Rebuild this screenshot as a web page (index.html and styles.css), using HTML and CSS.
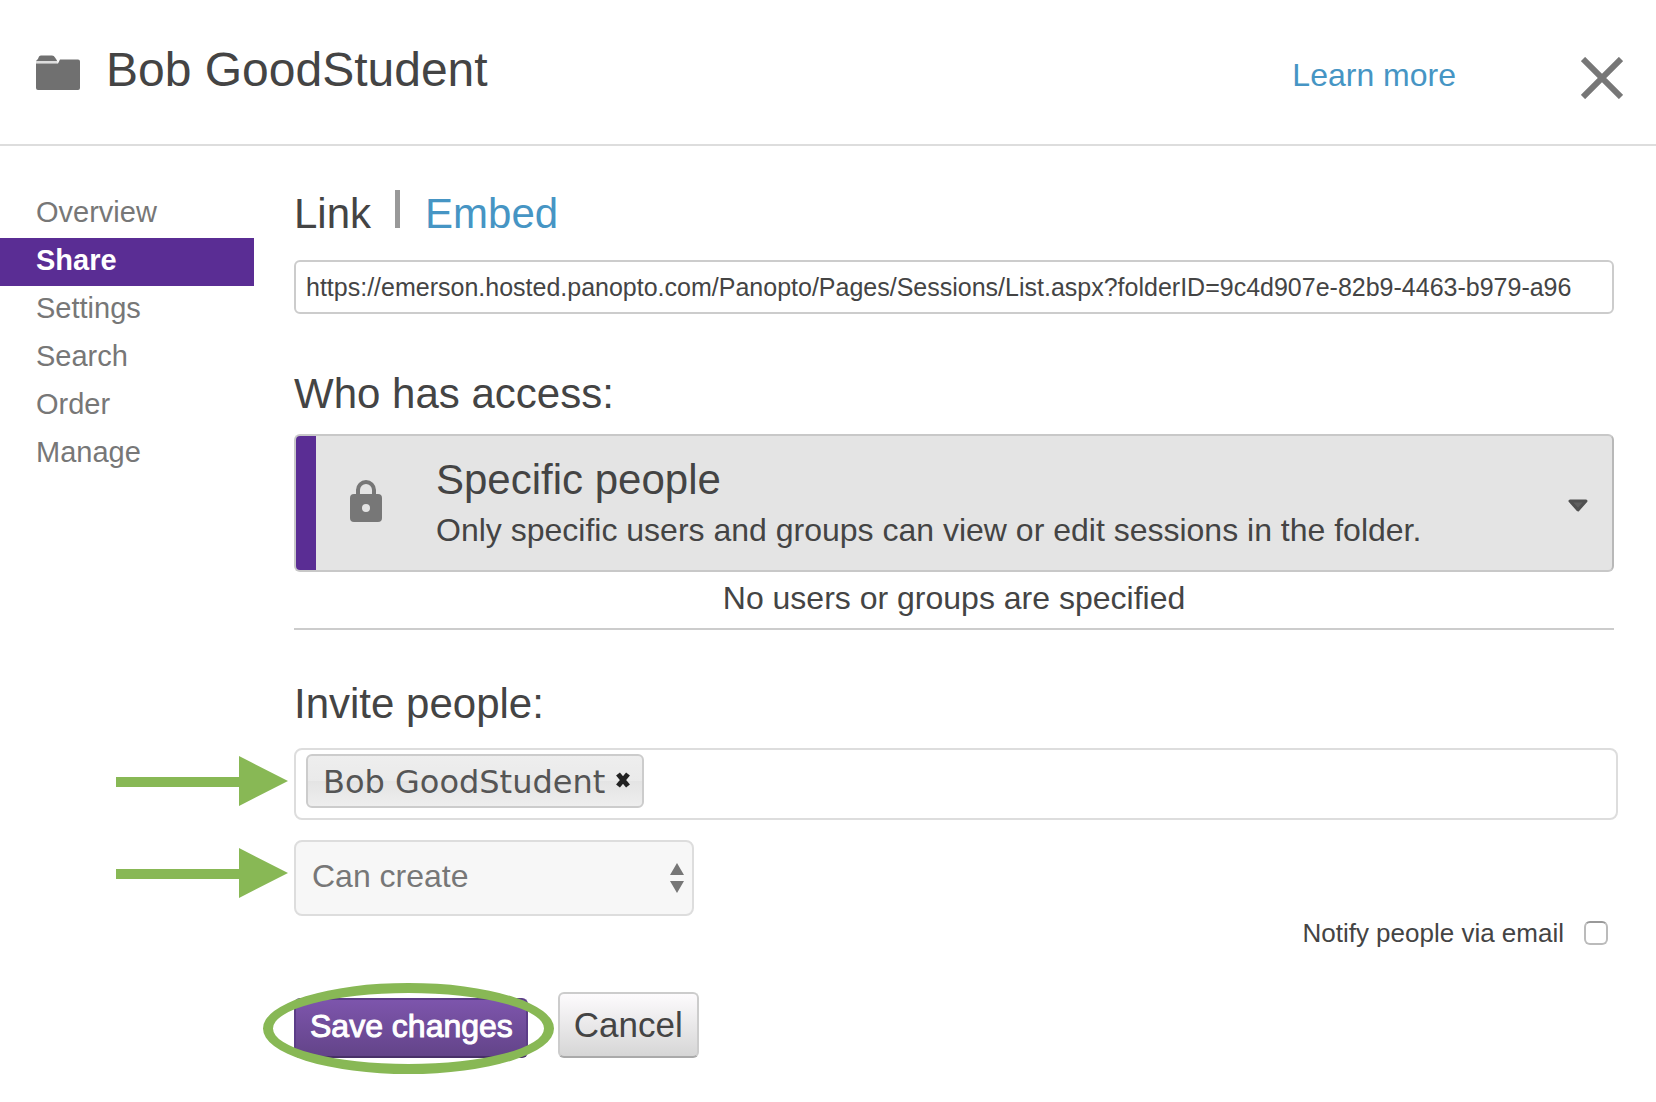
FILE: index.html
```html
<!DOCTYPE html>
<html lang="en">
<head>
    <meta charset="UTF-8">
    <meta name="viewport" content="width=device-width, initial-scale=1.0">
    <title>Bob GoodStudent</title>
    <link rel="stylesheet" href="styles.css">
</head>
<body>
    <header class="header">
        <svg class="folder-icon" width="44" height="36" viewBox="0 0 44 36">
            <path d="M0 6 Q2 5 3 1.5 Q4 0.5 5 0.5 H16 Q18 0.5 19 2.5 L21 5.5 L20.5 6.5 H0z" fill="#707070"/>
            <path d="M0 6 H21.5 V8.5 H0z" fill="#ddd"/>
            <path d="M0 8.5 H22 L24 4.5 H42 Q44 4.5 44 6.5 V33 Q44 35 42 35 H2 Q0 35 0 33z" fill="#707070"/>
        </svg>
        <h1>Bob GoodStudent</h1>
        <a class="learn-more" href="#">Learn more</a>
        <button class="close-button" type="button" aria-label="Close">
            <svg width="42" height="42" viewBox="0 0 42 42">
                <path d="M2 2 L40 40 M40 2 L2 40" stroke="#777" stroke-width="6"/>
            </svg>
        </button>
    </header>

    <div class="content">
        <nav class="sidebar">
            <a href="#">Overview</a>
            <a href="#" class="active">Share</a>
            <a href="#">Settings</a>
            <a href="#">Search</a>
            <a href="#">Order</a>
            <a href="#">Manage</a>
        </nav>

        <main class="main">
            <div class="tabs">
                <h2>Link</h2>
                <span class="separator"></span>
                <a href="#">Embed</a>
            </div>
            <input class="url-input" type="text" aria-label="Link" readonly value="https://emerson.hosted.panopto.com/Panopto/Pages/Sessions/List.aspx?folderID=9c4d907e-82b9-4463-b979-a96">

            <h2 class="access-title">Who has access:</h2>
            <button class="access-select" type="button">
                <span class="access-bar"></span>
                <svg class="lock-icon" width="32" height="42" viewBox="0 0 32 42">
                    <path d="M8 16 V10 a8 8 0 0 1 16 0 V16" fill="none" stroke="#777" stroke-width="4"/>
                    <path fill-rule="evenodd" d="M4 14 H28 a4 4 0 0 1 4 4 V38 a4 4 0 0 1 -4 4 H4 a4 4 0 0 1 -4 -4 V18 a4 4 0 0 1 4 -4z M16 24 a4 4 0 1 0 0 8 a4 4 0 1 0 0 -8z" fill="#777"/>
                </svg>
                <span class="access-text">
                    <span class="access-name">Specific people</span>
                    <span class="access-info">Only specific users and groups can view or edit sessions in the folder.</span>
                </span>
                <svg class="caret-icon" width="22" height="14" viewBox="0 0 22 14">
                    <path d="M3 2 H19 L11 11z" fill="#606060" stroke="#505050" stroke-width="3" stroke-linejoin="round"/>
                </svg>
            </button>
            <p class="no-users">No users or groups are specified</p>

            <h2 class="invite-title"><label for="invite">Invite people:</label></h2>
            <div class="field">
                <svg class="arrow" width="172" height="50" viewBox="0 0 172 50">
                    <path d="M0 21 H123 V0 L172 25 L123 50 V31 H0z" fill="#88b855"/>
                </svg>
                <div class="invite-box">
                    <span class="chip">
                        Bob GoodStudent
                        <button type="button" aria-label="Remove Bob GoodStudent">
                            <svg width="16" height="16" viewBox="0 0 16 16">
                                <path d="M3 2 L13 14 M13 2 L3 14" stroke="#222" stroke-width="5"/>
                            </svg>
                        </button>
                    </span>
                    <input type="text" id="invite">
                </div>
            </div>
            <div class="field role-field">
                <svg class="arrow" width="172" height="50" viewBox="0 0 172 50">
                    <path d="M0 21 H123 V0 L172 25 L123 50 V31 H0z" fill="#88b855"/>
                </svg>
                <div class="role-box">
                    <select class="role-select" aria-label="Role">
                        <option>Can create</option>
                    </select>
                    <svg class="updown-icon" width="14" height="30" viewBox="0 0 14 30">
                        <path d="M0 12 L7 0 L14 12z M0 18 H14 L7 30z" fill="#777"/>
                    </svg>
                </div>
            </div>

            <div class="notify">
                <label for="notify">Notify people via email</label>
                <input type="checkbox" id="notify">
            </div>

            <div class="buttons">
                <div class="save-wrap">
                    <button class="save-button" type="button">Save changes</button>
                    <span class="ring"></span>
                </div>
                <button class="cancel-button" type="button">Cancel</button>
            </div>
        </main>
    </div>
</body>
</html>
```

FILE: styles.css
```css
* {
    box-sizing: border-box;
}

body {
    margin: 0;
    background-color: #fff;
    color: #444;
    font-family: "Liberation Sans", Arial, sans-serif;
    font-size: 32px;
    line-height: 40px;
}

svg {
    display: block;
    flex-shrink: 0;
}

a {
    color: #4695c4;
    text-decoration: none;
}

button,
input,
select {
    margin: 0;
    color: inherit;
    font-family: inherit;
}

button {
    cursor: pointer;
}

h1,
h2,
p {
    margin: 0;
    font-weight: normal;
}

h1 {
    padding-bottom: 4px;
    font-size: 48px;
    line-height: 56px;
}

h2,
.tabs a {
    font-size: 42px;
    line-height: 48px;
}

.header {
    display: flex;
    align-items: center;
    height: 146px;
    padding: 0 33px 0 36px;
    border-bottom: 2px solid #ddd;
}

.folder-icon {
    margin: 2px 26px 0 0;
}

.learn-more {
    margin-left: auto;
    padding-top: 6px;
}

.close-button {
    margin-left: 125px;
    padding: 12px 0 0;
    border: none;
    background: none;
}

.content {
    display: flex;
    padding-top: 44px;
}

.sidebar {
    flex: 0 0 254px;
}

.sidebar a {
    display: block;
    padding: 0 0 4px 36px;
    color: #777;
    font-size: 29px;
    line-height: 44px;
}

.sidebar a.active {
    background-color: #5a2d94;
    color: #fff;
    font-weight: bold;
}

.main {
    flex: 1;
    min-width: 0;
    padding: 0 42px 40px 40px;
}

.tabs {
    display: flex;
    margin-bottom: 22px;
}

.separator {
    width: 5px;
    height: 38px;
    margin: 0 25px 0 24px;
    background-color: #999;
}

.url-input {
    display: block;
    width: 100%;
    height: 54px;
    padding: 0 10px;
    border: 2px solid #ccc;
    border-radius: 6px;
    font-size: 25px;
}

.access-title {
    margin: 56px 0 16px;
}

.access-select {
    display: flex;
    align-items: center;
    width: 100%;
    padding: 0 23px 0 0;
    overflow: hidden;
    border: 2px solid #c8c8c8;
    border-right-color: #b8b8b8;
    border-radius: 6px;
    background-color: #e4e4e4;
    text-align: left;
}

.access-bar {
    align-self: stretch;
    width: 20px;
    background-color: #5a2d94;
}

.lock-icon {
    margin: 0 54px 4px 34px;
}

.access-text {
    flex: 1;
    padding: 20px 0;
}

.access-name,
.access-info {
    display: block;
}

.access-name {
    font-size: 42px;
    line-height: 48px;
}

.access-info {
    margin-top: 6px;
    font-size: 32px;
    line-height: 40px;
}

.caret-icon {
    margin-top: 6px;
}

.no-users {
    padding: 6px 0 10px;
    border-bottom: 2px solid #ccc;
    text-align: center;
}

.invite-title {
    margin: 50px 0 20px;
}

.field {
    position: relative;
}

/* green arrows point at the fields from the left */
.arrow {
    position: absolute;
    top: 8px;
    right: 100%;
    margin-right: 6px;
}

.invite-box {
    display: flex;
    height: 72px;
    margin-right: -4px;
    padding: 4px 10px;
    border: 2px solid #ddd;
    border-radius: 8px;
}

.chip {
    display: flex;
    align-items: center;
    height: 54px;
    padding: 2px 11px 0 15px;
    border: 2px solid #ccc;
    border-radius: 6px;
    background: linear-gradient(#eee, #eaeaea 50%, #e4e4e4 50%, #eee);
    color: #555;
    font-family: "DejaVu Sans", Verdana, sans-serif;
    white-space: nowrap;
}

.chip button {
    margin-left: 10px;
    padding: 0 0 4px;
    border: none;
    background: none;
}

.invite-box input {
    flex: 1;
    min-width: 0;
    border: none;
    outline: none;
    font-size: 32px;
}

.role-field {
    margin-top: 20px;
}

.role-box {
    position: relative;
    width: 400px;
}

.role-select {
    display: block;
    width: 100%;
    height: 76px;
    padding: 0 40px 4px 16px;
    border: 2px solid #ddd;
    border-radius: 8px;
    background-color: #f7f7f7;
    color: #777;
    font-size: 32px;
    appearance: none;
}

.updown-icon {
    position: absolute;
    top: 23px;
    right: 10px;
    pointer-events: none;
}

.notify {
    display: flex;
    align-items: center;
    justify-content: flex-end;
    gap: 20px;
    margin: 2px 6px 44px 0;
    font-size: 26px;
    line-height: 30px;
}

.notify input {
    width: 24px;
    height: 24px;
    border: 2px solid #bbb;
    border-top-color: #999;
    border-radius: 6px;
    background-color: #fff;
    appearance: none;
}

.buttons {
    display: flex;
    align-items: flex-end;
    gap: 30px;
}

.save-wrap {
    position: relative;
}

.save-button {
    display: block;
    height: 60px;
    padding: 0 13px 4px 14px;
    border: 2px solid #5c3d88;
    border-bottom-color: #483068;
    border-radius: 6px;
    background: linear-gradient(#7d55ac, #634489);
    color: #fff;
    font-size: 32px;
    -webkit-text-stroke: 1px #fff;
}

.ring {
    position: absolute;
    inset: -15px -26px -16px -31px;
    border: 10px solid #88b855;
    border-radius: 50%;
    pointer-events: none;
}

.cancel-button {
    height: 66px;
    padding: 0 14px;
    border: 2px solid #ccc;
    border-bottom-color: #aaa;
    border-radius: 6px;
    background: linear-gradient(#fdfbfd, #d6d6d6);
    font-size: 35px;
}
```
